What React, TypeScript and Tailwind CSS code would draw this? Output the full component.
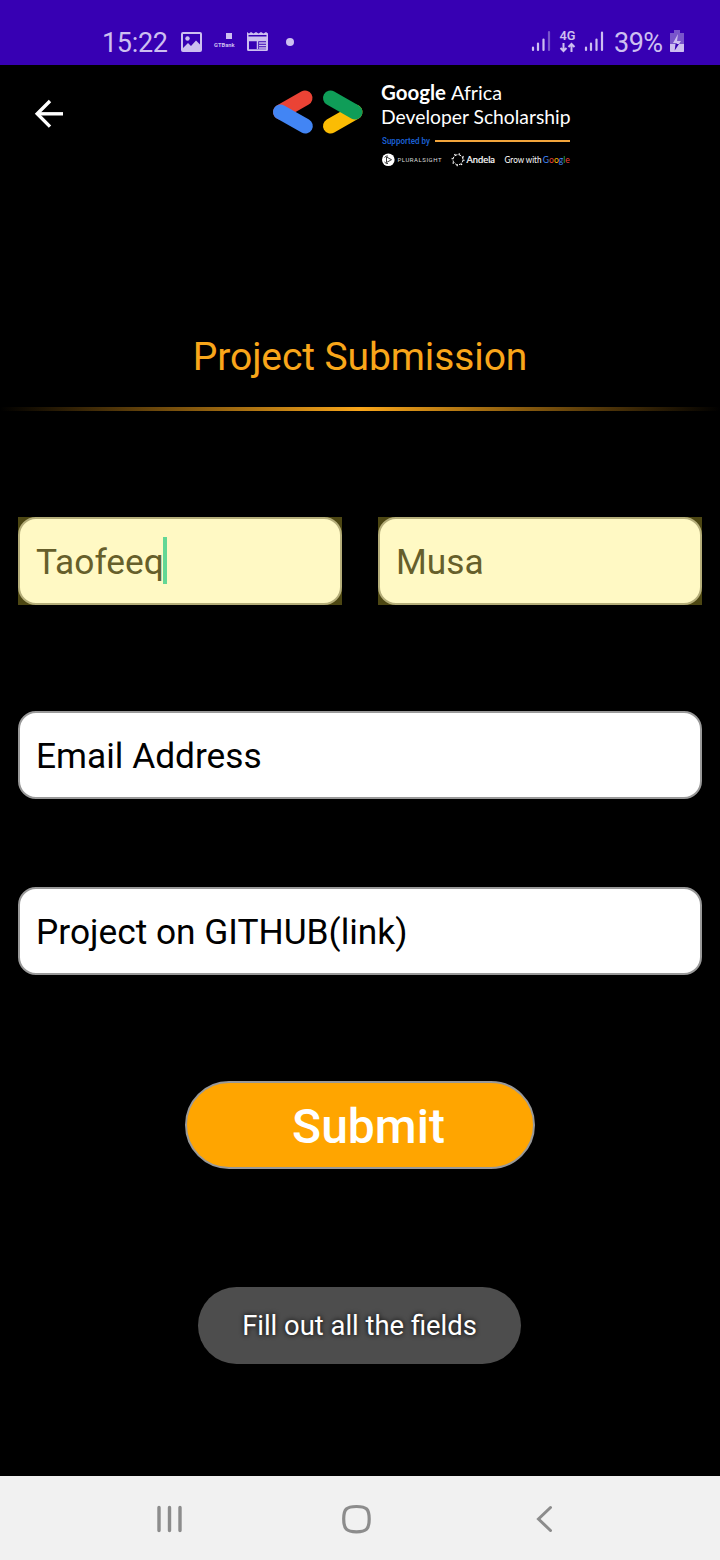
function StatusBar() {
  return (
    <header className="flex h-[65px] shrink-0 items-center bg-[#3700b3] pt-[18px] text-[#cdbff0]">
      <span className="ml-[102px] w-[79px] pt-[2px] text-[27px] leading-8 tracking-[-0.3px]">15:22</span>
      <svg className="h-[22px] w-[110px]" viewBox="181 31 110 22" fill="none">
        <rect x="182" y="33" width="19" height="18" rx="1" stroke="#cdbff0" strokeWidth="2" />
        <circle cx="187.5" cy="38.5" r="2.2" fill="#cdbff0" />
        <path d="M183 48 L188 43 L191 46 L196 40.500 L200 44.500 V50 H183Z" fill="#cdbff0" />
        <rect x="226" y="33" width="6" height="6" fill="#cdbff0" />
        <text x="214" y="47.300" fontSize="5.500" fontWeight="700" fill="#cdbff0" textLength="20.500" lengthAdjust="spacingAndGlyphs">GTBank</text>
        <path d="M247 32 L249 33.500 L251 32 L253.500 33.500 L256 32 L258.500 33.500 L261 32 L263.500 33.500 L266 32 L268 33.500 V49.500 Q268 51 266.500 51 H248.500 Q247 51 247 49.500Z" fill="#cdbff0" />
        <path d="M248.500 35H266.500V36.500H248.500ZM249 40H266V49.300H249Z" fill="#3700b3" />
        <path d="M249 40.500H266M257.500 41V49M259 43H266M259 45.500H266M259 48H266" stroke="#cdbff0" strokeWidth="1.500" />
      </svg>
      <span className="-ml-[5px] h-2 w-2 rounded-full bg-[#cdbff0]" />
      <svg className="ml-[237px] h-[28px] w-[75px]" viewBox="531 28 75 28" fill="none" strokeLinecap="round">
        <path d="M533 47.500V50M538 43.500V50M543.500 39.500V50" stroke="#cdbff0" strokeWidth="2.200" />
        <path d="M549 32V50" stroke="#7955cb" strokeWidth="2.200" />
        <text x="559.500" y="39.700" fontSize="12.500" fontWeight="600" fill="#cdbff0" textLength="16" lengthAdjust="spacingAndGlyphs">4G</text>
        <path d="M563.500 43V51M560.500 48L563.500 51L566.500 48M571.500 52V44M568.500 47L571.500 44L574.500 47" stroke="#cdbff0" strokeWidth="2" strokeLinecap="butt" />
        <path d="M586 47.500V50M591 43.500V50M596.500 39.500V50M602 32.500V50" stroke="#cdbff0" strokeWidth="2.200" />
      </svg>
      <span className="ml-2 w-[55px] whitespace-nowrap pt-[2px] text-[27px] leading-8 tracking-[-0.5px]">39%</span>
      <svg className="h-[23px] w-4" viewBox="669 30 16 23">
        <path d="M674 30H680V33H684V52H670V33H674Z" fill="#7955cb" />
        <path d="M670 44H684V51Q684 52 683 52H671Q670 52 670 51Z" fill="#cdbff0" />
        <path d="M678 34L673 43H677L675 50L681 41H677Z" fill="#cdbff0" />
        <path d="M675.500 44H679L674.700 50.500Z" fill="#3700b3" />
      </svg>
    </header>
  );
}

function Brand() {
  return (
    <svg className="h-[100px] w-[310px]" viewBox="270 75 310 100" fill="none">
      <g strokeWidth="15" strokeLinecap="round">
        <path d="M305 98L280.500 112" stroke="#ea4335" />
        <path d="M280.500 112L305.300 126" stroke="#4285f4" />
        <path d="M330.500 126L355 112" stroke="#fbbc04" />
        <path d="M330.500 98L355 112" stroke="#0f9d58" />
      </g>
      <g className="font-['Lato',sans-serif]" fill="#fff">
        <text x="381" y="100" fontSize="20" fontWeight="700" textLength="65" lengthAdjust="spacingAndGlyphs">Google</text>
        <text x="451" y="100" fontSize="20" textLength="51" lengthAdjust="spacingAndGlyphs">Africa</text>
        <text x="381" y="123.500" fontSize="20" textLength="189.500" lengthAdjust="spacingAndGlyphs">Developer Scholarship</text>
      </g>
      <text x="382" y="143.700" fontSize="8.200" fontWeight="600" fill="#1a5fd0" textLength="48" lengthAdjust="spacingAndGlyphs">Supported by</text>
      <path d="M435 141H570" stroke="#f2a53c" strokeWidth="2" />
      <circle cx="388.300" cy="159.700" r="6.300" fill="#fff" />
      <path d="M384.500 157.500Q386 155.500 388 156M384.500 162Q386 164 388 163.500M386.500 157L391.500 159.700L386.500 162.500Z" stroke="#222" strokeWidth="0.900" />
      <text x="397.500" y="162" fontSize="6" fill="#ddd" textLength="44" lengthAdjust="spacing">PLURALSIGHT</text>
      <circle cx="458" cy="159.700" r="5" stroke="#fff" strokeWidth="1" strokeDasharray="2.700 1.227" />
      <circle cx="458" cy="159.700" r="5.900" stroke="#fff" strokeWidth="1.200" strokeDasharray="1.300 3.334" />
      <g className="font-['Lato',sans-serif]">
        <text x="466.500" y="163" fontSize="9.500" fontWeight="400" fill="#fff" stroke="#fff" strokeWidth="0.200" textLength="28.500" lengthAdjust="spacingAndGlyphs">Andela</text>
        <text x="504.500" y="163" fontSize="8.800" fill="#fff" textLength="37" lengthAdjust="spacingAndGlyphs">Grow with</text>
        <text x="542.800" y="163" fontSize="8.800" fontWeight="400" fill="#4285f4" textLength="27" lengthAdjust="spacingAndGlyphs">
          G<tspan fill="#ea4335">o</tspan><tspan fill="#fbbc04">o</tspan>g<tspan fill="#34a853">l</tspan><tspan fill="#ea4335">e</tspan>
        </text>
      </g>
    </svg>
  );
}

function AutofilledField({ value, active = false }: { value: string; active?: boolean }) {
  return (
    <div className="h-[88px] flex-1 bg-[#4d4713]">
      <div className="flex h-full items-center rounded-[18px] border-2 border-[#b5ae7a] bg-[#fff9c4] pl-4 text-[35.3px] text-[#665f2b]">
        <span className="pt-[3px]">{value}</span>
        {active && <span className="-mt-px -ml-px h-[47px] w-1 bg-[#63d795]" />}
      </div>
    </div>
  );
}

function Field({ label, className }: { label: string; className: string }) {
  return (
    <div className={`flex h-[88px] shrink-0 items-center rounded-[18px] border-2 border-[#999] bg-white pl-4 text-[35.3px] text-black ${className}`}>
      <span className="pt-[3px]">{label}</span>
    </div>
  );
}

function NavigationBar() {
  return (
    <nav className="mt-auto flex h-[84px] shrink-0 items-center bg-[#f1f1f1] pl-[155px] pt-[2px]">
      <svg className="h-[30px] w-[400px]" viewBox="155 1504.500 400 30" fill="none" stroke="#8c8c8c" strokeLinecap="round">
        <path d="M159 1508V1531M169.500 1508V1531M180 1508V1531" strokeWidth="3.400" />
        <path d="M356.500 1507C366.500 1507 369.200 1509.500 369.200 1519.500S366.500 1532.300 356.500 1532.300S343.700 1529.500 343.700 1519.500S346.500 1507 356.500 1507Z" strokeWidth="3.200" />
        <path d="M550.500 1508L538.500 1519.500L550.500 1531" strokeWidth="3" strokeLinecap="round" />
      </svg>
    </nav>
  );
}

export default function App() {
  return (
    <div className="flex h-[1560px] w-[720px] flex-col overflow-hidden bg-black font-['Roboto',sans-serif]">
      <StatusBar />
      <div className="flex h-[110px] shrink-0 items-start pl-[34px] pt-[10px]">
        <svg className="mt-[24px] h-[30px] w-[30px]" viewBox="34 99 30 30" fill="none" stroke="#fff" strokeWidth="3.400">
          <path d="M63 113.800H37" />
          <path d="M50 101L37.200 113.800L50 126.600" />
        </svg>
        <div className="ml-[206px]">
          <Brand />
        </div>
      </div>
      <h1 className="mt-[158px] pt-px text-center text-[39px] leading-[47px] tracking-[-0.1px] text-[#f9a61a]">Project Submission</h1>
      <div className="mt-[26px] h-1 shrink-0 bg-linear-to-r/srgb from-black via-[#f9a61a] to-black" />
      <div className="mx-[18px] mt-[106px] flex gap-9">
        <AutofilledField value="Taofeeq" active />
        <AutofilledField value="Musa" />
      </div>
      <Field label="Email Address" className="mx-[18px] mt-[106px]" />
      <Field label="Project on GITHUB(link)" className="mx-[18px] mt-[88px]" />
      <button className="mt-[106px] h-[88px] w-[350px] shrink-0 self-center rounded-full border-2 border-[#999] bg-[#ffa500] pl-[17px] pt-1 text-[48px] leading-none font-medium text-white">
        Submit
      </button>
      <div className="mt-[118px] ml-[198px] flex h-[77px] w-[323px] shrink-0 items-center justify-center rounded-full bg-[#4d4d4d] pt-[2px] text-[27.4px] text-white [text-shadow:0_0_5px_#000]">
        Fill out all the fields
      </div>
      <NavigationBar />
    </div>
  );
}
